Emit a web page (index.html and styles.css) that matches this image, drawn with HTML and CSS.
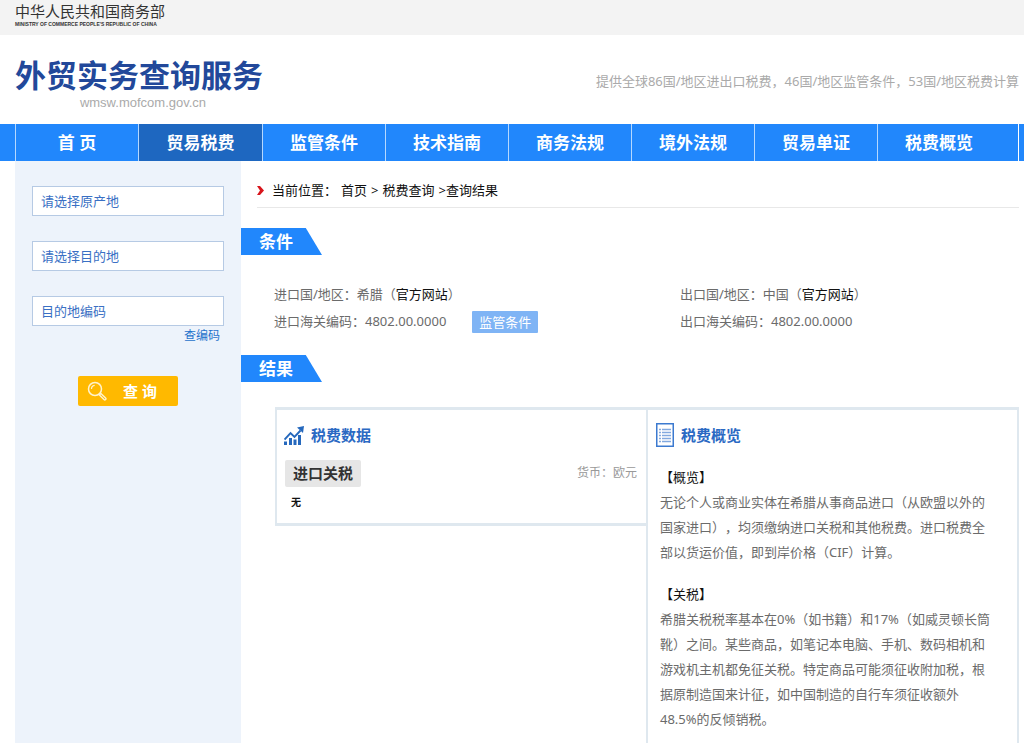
FILE: index.html
```html
<!DOCTYPE html>
<html lang="zh-CN">
<head>
<meta charset="utf-8">
<meta name="viewport" content="width=device-width, initial-scale=1">
<title>外贸实务查询服务</title>
<link rel="stylesheet" href="styles.css">
</head>
<body>
<div class="topbar">
  <div class="ministry">中华人民共和国商务部</div>
  <div class="ministry-en">MINISTRY OF COMMERCE PEOPLE'S REPUBLIC OF CHINA</div>
</div>
<header class="header">
  <div class="brand">
    <h1 class="brand-name">外贸实务查询服务</h1>
    <div class="brand-url">wmsw.mofcom.gov.cn</div>
  </div>
  <p class="slogan">提供全球86国/地区进出口税费，46国/地区监管条件，53国/地区税费计算</p>
</header>
<nav class="nav">
  <a class="nav-item" href="#">首 页</a>
  <a class="nav-item nav-active" href="#">贸易税费</a>
  <a class="nav-item" href="#">监管条件</a>
  <a class="nav-item" href="#">技术指南</a>
  <a class="nav-item" href="#">商务法规</a>
  <a class="nav-item" href="#">境外法规</a>
  <a class="nav-item" href="#">贸易单证</a>
  <a class="nav-item" href="#">税费概览</a>
</nav>
<div class="page">
  <form class="sidebar">
    <input class="field" type="text" placeholder="请选择原产地" aria-label="请选择原产地">
    <input class="field" type="text" placeholder="请选择目的地" aria-label="请选择目的地">
    <input class="field field-last" type="text" placeholder="目的地编码" aria-label="目的地编码">
    <a class="code-link" href="#">查编码</a>
    <button class="search" type="button">
      <svg class="search-icon" viewBox="0 0 20 20" fill="none" stroke="#fff3cf">
        <circle cx="8" cy="8" r="6.5" stroke-width="1.5"/>
        <path d="M4.5 8a3.6 3.6 0 0 1 3.2-3.6" stroke-width="1.2"/>
        <path d="M12.4 13.9l1.500-1.500 4.700 4.500a1.100 1.100 0 0 1-1.600 1.600z" stroke-width="1.4"/>
      </svg>
      <span>查 询</span>
    </button>
  </form>
  <main class="main">
    <div class="crumbs">
      <svg class="crumb-icon" viewBox="0 0 7 9"><path d="M0 0h3l4 4.5L3 9H0l3-4.5z" fill="#d8151c"/></svg>
      <span class="crumb-path"><span>当前位置：</span><a href="#">首页</a><span>&gt;</span><a href="#">税费查询</a><span>&gt;查询结果</span></span>
    </div>
    <h2 class="tag">条件</h2>
    <div class="info">
      <div>进口国/地区：希腊（<a href="#">官方网站</a>）</div>
      <div>出口国/地区：中国（<a href="#">官方网站</a>）</div>
      <div class="info-code">进口海关编码：4802.00.0000 <button class="cond" type="button">监管条件</button></div>
      <div>出口海关编码：4802.00.0000</div>
    </div>
    <h2 class="tag">结果</h2>
    <div class="result">
      <section class="data">
        <h3 class="heading">
          <svg class="chart-icon" viewBox="0 0 20 19" fill="#2568bd">
            <path d="M0 15.500h3V19H0zM5 12h3v7H5zM9.500 13.500h3V19h-3zM14 9h3v10h-3z"/>
            <path d="M.5 13.500l6-6.500 4 4 6-6.500" fill="none" stroke="#2568bd" stroke-width="1.900"/>
            <path d="M13 1.500L20 0l-1 7z"/>
          </svg>
          税费数据
        </h3>
        <div class="data-row"><span class="duty">进口关税</span><span class="currency">货币：欧元</span></div>
        <div class="none">无</div>
      </section>
      <section class="overview">
        <h3 class="heading">
          <svg class="list-icon" viewBox="0 0 18 24" fill="none">
            <path d="M.75.75h16.500v22.500H.75z" fill="#fff" stroke="#3c7ad0" stroke-width="1.5"/>
            <path d="M3 6.500h2m1 0h9M3 9.500h2m1 0h9M3 12.500h2m1 0h9M3 15.500h2m1 0h9M3 18.500h2m1 0h9" stroke="#82a9df" stroke-width="1.3"/>
          </svg>
          税费概览
        </h3>
        <h4 class="topic">【概览】</h4>
        <p class="text">无论个人或商业实体在希腊从事商品进口（从欧盟以外的国家进口），均须缴纳进口关税和其他税费。进口税费全部以货运价值，即到岸价格（CIF）计算。</p>
        <h4 class="topic">【关税】</h4>
        <p class="text">希腊关税税率基本在0%（如书籍）和17%（如威灵顿长筒靴）之间。某些商品，如笔记本电脑、手机、数码相机和游戏机主机都免征关税。特定商品可能须征收附加税，根据原制造国来计征，如中国制造的自行车须征收额外48.5%的反倾销税。</p>
      </section>
    </div>
  </main>
</div>
</body>
</html>
```
FILE: styles.css
```css
* { box-sizing: border-box; }
body {
  margin: 0;
  min-height: 100vh;
  display: flex;
  flex-direction: column;
  background: #fff;
  color: #6b6b6b;
  font: 13px/25px "Noto Sans", "Noto Sans CJK SC", sans-serif;
  text-spacing-trim: space-all;
}
h1, h2, h3, h4, p { margin: 0; }
a { color: #111; text-decoration: none; }
input, button { font: inherit; }

.topbar { height: 35px; padding: 3px 15px 0; background: #f3f3f3; color: #333; }
.ministry { font-size: 15px; line-height: 17px; }
.ministry-en { font: bold 5px/8px "Liberation Sans", sans-serif; }

.header { height: 89px; padding: 22px 5px 0 15px; display: flex; justify-content: space-between; }
.brand-name { color: #22489a; font-size: 31px; line-height: 37px; font-weight: 700; }
.brand-url { padding-left: 8px; font: 13px/18px "Liberation Sans", sans-serif; color: #aaa; text-align: center; }
.slogan { padding-top: 12px; color: #aaa; }

.nav { display: flex; height: 37px; padding: 0 5px 0 15px; background: #2187fc; }
.nav-item {
  width: 123px;
  border-left: 1px solid #b5d8ff;
  color: #fff;
  font-size: 17px;
  font-weight: 700;
  line-height: 38px;
  text-align: center;
}
.nav-item:last-child { flex: 1; padding-right: 18px; border-right: 1px solid #fff; }
.nav-active { background: #1e67c0; width: 124px; }

.page { flex: 1; display: flex; padding: 0 5px 0 15px; }
.sidebar { width: 226px; padding: 25px 17px; background: #edf3fb; display: flex; flex-direction: column; }
.field { height: 30px; margin-bottom: 25px; padding: 0 8px; border: 1px solid #b6cae4; border-radius: 0; background: #fff; color: #3a70c4; }
.field::placeholder { color: #3a70c4; opacity: 1; }
.field-last { margin-bottom: 0; }
.code-link { align-self: flex-end; padding-right: 4px; color: #1f72cb; font-size: 12px; line-height: 20px; }
.search {
  align-self: center;
  width: 100px;
  height: 30px;
  margin-top: 30px;
  padding: 0 21px 0 9px;
  display: flex;
  align-items: center;
  justify-content: space-between;
  border: 0;
  border-radius: 2px;
  background: #ffb900;
  color: #fff;
  font-size: 15px;
  font-weight: 700;
}
.search-icon { width: 20px; height: 20px; }

.main { flex: 1; min-width: 0; }
.crumbs { margin-left: 16px; height: 47px; padding-top: 12px; display: flex; align-items: center; gap: 8px; border-bottom: 1px solid #e8e8e8; color: #111; }
.crumb-icon { width: 7px; height: 9px; }
.crumb-path { display: flex; gap: 4px; }
.tag { width: 81px; height: 27px; margin-top: 20px; padding-left: 18px; background: #2187fc; clip-path: polygon(0 0, 80% 0, 100% 100%, 0 100%); color: #fff; font-size: 17px; line-height: 28px; }
.info { display: grid; grid-template-columns: 406px 1fr; margin: 26px 0 0 33px; line-height: 27px; }
.info-code { display: flex; align-items: center; gap: 26px; }
.cond { height: 22px; padding: 0 7px; border: 0; border-radius: 1px; background: #7fb4f5; color: #fff; line-height: 22px; }

.result { display: grid; grid-template-columns: 371px 1fr; align-items: start; margin: 25px 0 0 34px; border-top: 3px solid #dfe8ef; }
.data { border: solid #dfe8ef; border-width: 0 0 3px 2px; padding: 12px 9px 8px 8px; }
.overview { border: solid #dfe8ef; border-width: 0 2px; padding: 12px 23px 30px 12px; }
.heading { display: flex; align-items: center; gap: 7px; height: 26px; color: #2b69c3; font-size: 15px; }
.chart-icon { width: 20px; height: 19px; }
.data .heading { margin-left: -1px; }
.list-icon { width: 18px; height: 24px; }
.overview .heading { margin-left: -4px; }
.data-row { display: flex; justify-content: space-between; margin-top: 12px; }
.duty { padding: 0 8px; border-radius: 2px; background: #e6e6e6; color: #333; font-size: 15px; font-weight: 700; line-height: 27px; }
.currency { color: #999; font-size: 12px; }
.none { margin-top: 3px; padding-left: 6px; color: #111; font-size: 10px; font-weight: 700; }
.topic { margin-top: 17px; color: #111; font-weight: 400; }
```
